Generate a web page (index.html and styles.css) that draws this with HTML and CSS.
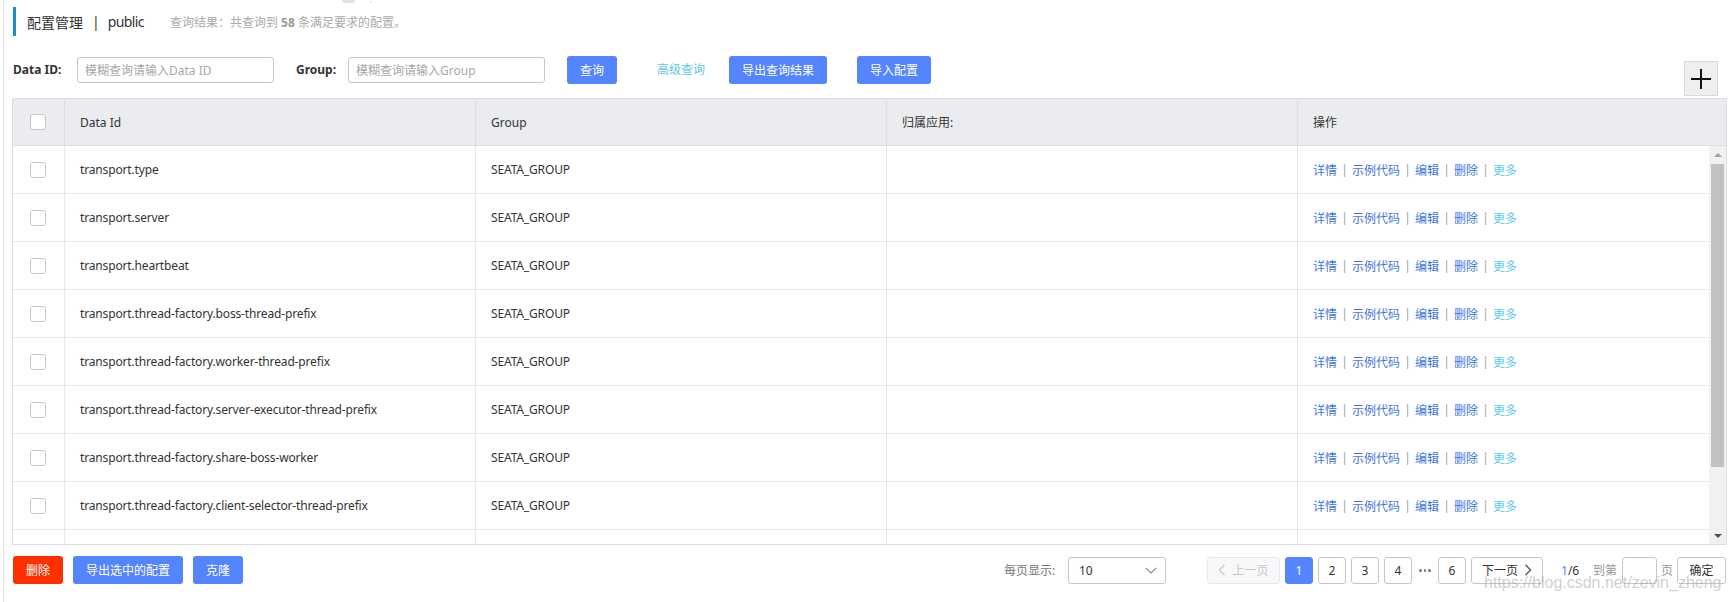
FILE: index.html
```html
<!DOCTYPE html>
<html lang="zh-CN">
<head>
<meta charset="utf-8">
<title>配置管理</title>
<link rel="stylesheet" href="styles.css">
</head>
<body>
<div class="page">
  <span class="artifact"></span><span class="artifact-dot"></span>

  <div class="title-row">
    <span class="title">配置管理</span><span class="title title-bar">|</span><span class="title title-ns">public</span>
    <span class="summary">查询结果：共查询到 <b>58</b> 条满足要求的配置。</span>
  </div>

  <div class="search-row">
    <label class="field-label label-id">Data ID:</label>
    <input class="text-input" type="text" placeholder="模糊查询请输入Data ID">
    <label class="field-label label-group">Group:</label>
    <input class="text-input input-group" type="text" placeholder="模糊查询请输入Group">
    <button class="btn primary btn-query">查询</button>
    <span class="adv-link">高级查询</span>
    <button class="btn primary btn-export">导出查询结果</button>
    <button class="btn primary btn-import">导入配置</button>
    <button class="plus-btn" aria-label="新增">
      <svg width="22" height="22" viewBox="0 0 22 22"><path d="M11 1v20M1 11h20" stroke="#111" stroke-width="2" fill="none"/></svg>
    </button>
  </div>

  <div class="table">
    <div class="thead">
      <div class="cell cell-check"><span class="checkbox"></span></div>
      <div class="cell">Data Id</div>
      <div class="cell">Group</div>
      <div class="cell">归属应用:</div>
      <div class="cell last">操作</div>
    </div>
    <div class="tbody">
      <div class="rows">
        <div class="row">
          <div class="cell cell-check"><span class="checkbox"></span></div>
          <div class="cell latin">transport.type</div>
          <div class="cell latin">SEATA_GROUP</div>
          <div class="cell"></div>
          <div class="cell last actions"><span class="act">详情</span><span class="sep">|</span><span class="act">示例代码</span><span class="sep">|</span><span class="act">编辑</span><span class="sep">|</span><span class="act">删除</span><span class="sep">|</span><span class="more">更多</span></div>
        </div>
        <div class="row">
          <div class="cell cell-check"><span class="checkbox"></span></div>
          <div class="cell latin">transport.server</div>
          <div class="cell latin">SEATA_GROUP</div>
          <div class="cell"></div>
          <div class="cell last actions"><span class="act">详情</span><span class="sep">|</span><span class="act">示例代码</span><span class="sep">|</span><span class="act">编辑</span><span class="sep">|</span><span class="act">删除</span><span class="sep">|</span><span class="more">更多</span></div>
        </div>
        <div class="row">
          <div class="cell cell-check"><span class="checkbox"></span></div>
          <div class="cell latin">transport.heartbeat</div>
          <div class="cell latin">SEATA_GROUP</div>
          <div class="cell"></div>
          <div class="cell last actions"><span class="act">详情</span><span class="sep">|</span><span class="act">示例代码</span><span class="sep">|</span><span class="act">编辑</span><span class="sep">|</span><span class="act">删除</span><span class="sep">|</span><span class="more">更多</span></div>
        </div>
        <div class="row">
          <div class="cell cell-check"><span class="checkbox"></span></div>
          <div class="cell latin">transport.thread-factory.boss-thread-prefix</div>
          <div class="cell latin">SEATA_GROUP</div>
          <div class="cell"></div>
          <div class="cell last actions"><span class="act">详情</span><span class="sep">|</span><span class="act">示例代码</span><span class="sep">|</span><span class="act">编辑</span><span class="sep">|</span><span class="act">删除</span><span class="sep">|</span><span class="more">更多</span></div>
        </div>
        <div class="row">
          <div class="cell cell-check"><span class="checkbox"></span></div>
          <div class="cell latin">transport.thread-factory.worker-thread-prefix</div>
          <div class="cell latin">SEATA_GROUP</div>
          <div class="cell"></div>
          <div class="cell last actions"><span class="act">详情</span><span class="sep">|</span><span class="act">示例代码</span><span class="sep">|</span><span class="act">编辑</span><span class="sep">|</span><span class="act">删除</span><span class="sep">|</span><span class="more">更多</span></div>
        </div>
        <div class="row">
          <div class="cell cell-check"><span class="checkbox"></span></div>
          <div class="cell latin">transport.thread-factory.server-executor-thread-prefix</div>
          <div class="cell latin">SEATA_GROUP</div>
          <div class="cell"></div>
          <div class="cell last actions"><span class="act">详情</span><span class="sep">|</span><span class="act">示例代码</span><span class="sep">|</span><span class="act">编辑</span><span class="sep">|</span><span class="act">删除</span><span class="sep">|</span><span class="more">更多</span></div>
        </div>
        <div class="row">
          <div class="cell cell-check"><span class="checkbox"></span></div>
          <div class="cell latin">transport.thread-factory.share-boss-worker</div>
          <div class="cell latin">SEATA_GROUP</div>
          <div class="cell"></div>
          <div class="cell last actions"><span class="act">详情</span><span class="sep">|</span><span class="act">示例代码</span><span class="sep">|</span><span class="act">编辑</span><span class="sep">|</span><span class="act">删除</span><span class="sep">|</span><span class="more">更多</span></div>
        </div>
        <div class="row">
          <div class="cell cell-check"><span class="checkbox"></span></div>
          <div class="cell latin">transport.thread-factory.client-selector-thread-prefix</div>
          <div class="cell latin">SEATA_GROUP</div>
          <div class="cell"></div>
          <div class="cell last actions"><span class="act">详情</span><span class="sep">|</span><span class="act">示例代码</span><span class="sep">|</span><span class="act">编辑</span><span class="sep">|</span><span class="act">删除</span><span class="sep">|</span><span class="more">更多</span></div>
        </div>
        <div class="row">
          <div class="cell cell-check"><span class="checkbox"></span></div>
          <div class="cell"></div>
          <div class="cell"></div>
          <div class="cell"></div>
          <div class="cell last"></div>
        </div>
      </div>
      <div class="scrollbar">
        <div class="sb-btn"><span class="tri-up"></span></div>
        <div class="sb-thumb"></div>
        <div class="sb-space"></div>
        <div class="sb-btn"><span class="tri-down"></span></div>
      </div>
    </div>
  </div>

  <div class="footer">
    <button class="btn danger btn-del">删除</button>
    <button class="btn primary btn-gap">导出选中的配置</button>
    <button class="btn primary btn-gap">克隆</button>

    <div class="pager">
      <span class="pg-label">每页显示:</span>
      <div class="select">
        <span>10</span>
        <svg width="12" height="7" viewBox="0 0 12 7"><path d="M0.8 0.8L6 6l5.2-5.2" fill="none" stroke="#8a8a8a" stroke-width="1.2"/></svg>
      </div>
      <div class="pg-btn pg-prev disabled">
        <svg width="8" height="12" viewBox="0 0 8 12"><path d="M6.5 0.8L1.5 6l5 5.2" fill="none" stroke="#c9c9c9" stroke-width="1.3"/></svg>
        <span>上一页</span>
      </div>
      <div class="pg-btn pg-num active">1</div>
      <div class="pg-btn pg-num">2</div>
      <div class="pg-btn pg-num">3</div>
      <div class="pg-btn pg-num">4</div>
      <span class="pg-dots"><i></i><i></i><i></i></span>
      <div class="pg-btn pg-num pg-last">6</div>
      <div class="pg-btn pg-next">
        <span>下一页</span>
        <svg width="8" height="12" viewBox="0 0 8 12"><path d="M1.5 0.8L6.5 6l-5 5.2" fill="none" stroke="#555" stroke-width="1.3"/></svg>
      </div>
      <span class="pg-total"><em>1</em>/6</span>
      <span class="pg-goto">到第</span>
      <input class="pg-input" type="text">
      <span class="pg-page">页</span>
      <div class="pg-btn pg-ok">确定</div>
    </div>
  </div>

  <div class="watermark">https://blog.csdn.net/zevin_zheng</div>
</div>
</body>
</html>
```

FILE: styles.css
```css
* { box-sizing: border-box; }

html, body {
  margin: 0;
  padding: 0;
  background: #fff;
}

body {
  width: 1728px;
  height: 602px;
  overflow: hidden;
  font-family: "Noto Sans", "Noto Sans CJK SC", sans-serif;
  font-size: 12px;
  color: #333;
}

.page {
  position: relative;
  height: 602px;
  margin-left: 3px;
  border-left: 1px solid #e4e4e4;
  padding: 7px 1px 0 8px;
}

.artifact {
  position: absolute;
  left: 338px;
  top: 0;
  width: 13px;
  height: 3px;
  border-radius: 0 0 3px 3px;
  background: #e2e2e2;
}

.artifact-dot {
  position: absolute;
  left: 366px;
  top: 1px;
  width: 2px;
  height: 2px;
  border-radius: 50%;
  background: #e4e4e4;
}

/* title */
.title-row {
  display: flex;
  align-items: center;
  height: 29px;
  margin-left: 1px;
  padding-left: 11px;
  border-left: 3px solid #1e8dcf;
  white-space: nowrap;
}

.title {
  font-size: 14px;
  color: #333;
}

.title-bar {
  margin: 0 8px 0 9px;
}

.title-ns {
  letter-spacing: -0.6px;
}

.summary {
  margin-left: 26px;
  font-size: 12px;
  color: #aaa;
}

.summary b {
  font-weight: bold;
  color: #9a9a9a;
}

/* search */
.search-row {
  display: flex;
  align-items: flex-start;
  height: 40px;
  margin-top: 20px;
}

.field-label {
  line-height: 28px;
  font-weight: bold;
  color: #333;
  white-space: nowrap;
}

.label-id {
  width: 64px;
  margin-left: 1px;
}

.label-group {
  width: 52px;
  margin-left: 22px;
}

.text-input {
  width: 197px;
  height: 26px;
  margin: 1px 0 0 0;
  padding: 0 7px;
  border: 1px solid #c4c6cf;
  border-radius: 3px;
  font-family: inherit;
  font-size: 12px;
  color: #333;
  outline: none;
}

.text-input::placeholder {
  color: #a8a8a8;
}

.btn {
  display: inline-flex;
  align-items: center;
  justify-content: center;
  height: 28px;
  padding: 0 13px;
  border: none;
  border-radius: 3px;
  font-family: inherit;
  font-size: 12px;
  color: #fff;
  white-space: nowrap;
}

.primary { background: #5584ff; }
.danger { background: #ff3000; }

.btn-query { margin-left: 22px; }

.adv-link {
  margin-left: 40px;
  line-height: 28px;
  color: #5ec8e8;
  white-space: nowrap;
}

.btn-export { margin-left: 24px; }
.btn-import { margin-left: 30px; }

.plus-btn {
  display: flex;
  align-items: center;
  justify-content: center;
  width: 34px;
  height: 35px;
  margin: 5px 9px 0 auto;
  padding: 0;
  background: #efefef;
  border: 1px solid #dadada;
}

/* table */
.table {
  margin-top: 2px;
  border: 1px solid #dcdee3;
}

.thead,
.row {
  display: grid;
  grid-template-columns: 52px 411px 411px 411px 1fr;
}

.thead {
  height: 47px;
  background: #ebecf0;
  border-bottom: 1px solid #dcdee3;
}

.cell {
  display: flex;
  align-items: center;
  padding: 0 15px;
  border-right: 1px solid #dcdee3;
  white-space: nowrap;
  overflow: hidden;
}

.cell.last { border-right: none; }

.cell.latin { letter-spacing: -0.15px; }

.cell-check {
  justify-content: center;
  padding: 0 2px 0 0;
}

.checkbox {
  display: block;
  width: 16px;
  height: 16px;
  background: #fff;
  border: 1px solid #c4c6cf;
  border-radius: 3px;
}

.tbody {
  display: flex;
  height: 398px;
}

.rows {
  flex: 1;
  overflow: hidden;
}

.row {
  height: 48px;
  border-bottom: 1px solid #e6e7eb;
}

.row .cell {
  border-right-color: #e6e7eb;
}

.row .cell.last { border-right: none; }

.act { color: #3f74dc; }
.more { color: #5ec8e8; }

.sep {
  display: inline-block;
  width: 15px;
  text-align: center;
  color: #a0a0a0;
}

/* fake scrollbar */
.scrollbar {
  display: flex;
  flex-direction: column;
  width: 17px;
  background: #f1f1f1;
}

.sb-btn {
  display: flex;
  align-items: center;
  justify-content: center;
  height: 17px;
}

.tri-up {
  width: 0;
  height: 0;
  border-left: 4px solid transparent;
  border-right: 4px solid transparent;
  border-bottom: 4px solid #a3a3a3;
}

.tri-down {
  width: 0;
  height: 0;
  border-left: 4px solid transparent;
  border-right: 4px solid transparent;
  border-top: 4px solid #505050;
}

.sb-thumb {
  height: 303px;
  margin: 1px 2px 0;
  background: #c1c1c1;
}

.sb-space { flex: 1; }

/* footer */
.footer {
  display: flex;
  align-items: center;
  height: 28px;
  margin-top: 11px;
}

.btn-del { margin-left: 1px; }
.btn-gap { margin-left: 10px; }

.pager {
  display: flex;
  align-items: center;
  margin-left: auto;
  margin-right: 1px;
  white-space: nowrap;
}

.pg-label {
  width: 54px;
  color: #777;
}

.select {
  display: flex;
  align-items: center;
  justify-content: space-between;
  width: 98px;
  height: 27px;
  margin-left: 10px;
  padding: 0 8px 0 10px;
  border: 1px solid #c4c6cf;
  border-radius: 3px;
  color: #333;
}

.pg-btn {
  display: flex;
  align-items: center;
  justify-content: center;
  height: 27px;
  border: 1px solid #c4c6cf;
  border-radius: 3px;
  background: #fff;
  color: #333;
}

.pg-prev {
  width: 73px;
  margin-left: 41px;
  gap: 6px;
}

.pg-prev.disabled {
  background: #f7f8fa;
  border-color: #e6e7eb;
  color: #c8c8c8;
}

.pg-num {
  width: 28px;
  margin-left: 5px;
}

.pg-num.active {
  background: #5584ff;
  border-color: #5584ff;
  color: #fff;
}

.pg-dots {
  display: flex;
  gap: 2px;
  width: 12px;
  margin-left: 7px;
}

.pg-dots i {
  display: block;
  width: 3px;
  height: 3px;
  border-radius: 50%;
  background: #777;
}

.pg-num.pg-last { margin-left: 7px; }

.pg-next {
  width: 72px;
  margin-left: 5px;
  gap: 6px;
}

.pg-total {
  width: 16px;
  margin-left: 18px;
  color: #333;
}

.pg-total em {
  font-style: normal;
  color: #5584ff;
}

.pg-goto {
  width: 24px;
  margin-left: 16px;
  color: #999;
}

.pg-input {
  width: 35px;
  height: 27px;
  margin: 0 0 0 5px;
  padding: 0;
  border: 1px solid #c4c6cf;
  border-radius: 3px;
  outline: none;
}

.pg-page {
  width: 12px;
  margin-left: 4px;
  color: #999;
}

.pg-ok {
  width: 49px;
  margin-left: 4px;
}

.watermark {
  position: absolute;
  left: 1480px;
  top: 574px;
  font-family: "Liberation Sans", sans-serif;
  font-size: 16px;
  color: rgba(160, 160, 160, 0.5);
  white-space: nowrap;
  pointer-events: none;
}
```
